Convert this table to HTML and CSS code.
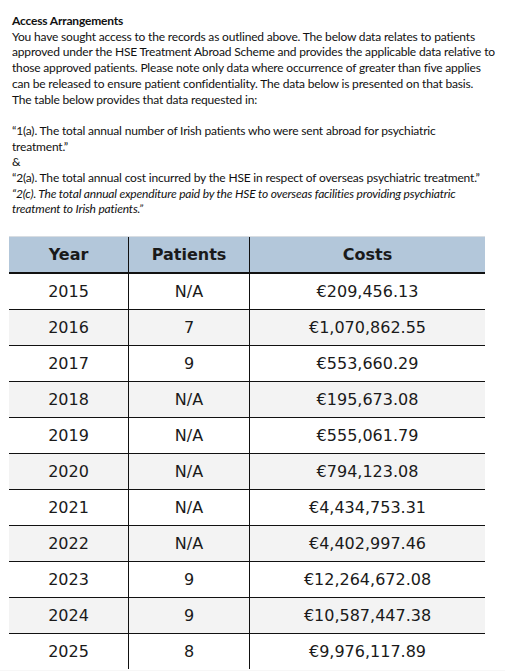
FILE: index.html
```html
<!DOCTYPE html>
<html lang="en">
<head>
    <meta charset="UTF-8">
    <meta name="viewport" content="width=device-width, initial-scale=1.0">
    <title>Access Arrangements</title>
    <link rel="stylesheet" href="styles.css">
</head>
<body>
    <section class="letter">
        <p class="title">Access Arrangements</p>
        <p>You have sought access to the records as outlined above. The below data relates to patients<br>
        approved under the HSE Treatment Abroad Scheme and provides the applicable data relative to<br>
        those approved patients. Please note only data where occurrence of greater than five applies<br>
        can be released to ensure patient confidentiality. The data below is presented on that basis.<br>
        The table below provides that data requested in:</p>

        <p class="gap">“1(a). The total annual number of Irish patients who were sent abroad for psychiatric<br>
        treatment.”<br>
        &amp;<br>
        “2(a). The total annual cost incurred by the HSE in respect of overseas psychiatric treatment.”<br>
        <em>“2(c). The total annual expenditure paid by the HSE to overseas facilities providing psychiatric<br>
        treatment to Irish patients.”</em></p>
    </section>

    <!-- Figures table -->
    <div class="table-wrap">
        <table class="figures">
            <thead>
                <tr><th>Year</th><th>Patients</th><th>Costs</th></tr>
            </thead>
            <tbody>
                <tr><td>2015</td><td>N/A</td><td>€209,456.13</td></tr>
                <tr><td>2016</td><td>7</td><td>€1,070,862.55</td></tr>
                <tr><td>2017</td><td>9</td><td>€553,660.29</td></tr>
                <tr><td>2018</td><td>N/A</td><td>€195,673.08</td></tr>
                <tr><td>2019</td><td>N/A</td><td>€555,061.79</td></tr>
                <tr><td>2020</td><td>N/A</td><td>€794,123.08</td></tr>
                <tr><td>2021</td><td>N/A</td><td>€4,434,753.31</td></tr>
                <tr><td>2022</td><td>N/A</td><td>€4,402,997.46</td></tr>
                <tr><td>2023</td><td>9</td><td>€12,264,672.08</td></tr>
                <tr><td>2024</td><td>9</td><td>€10,587,447.38</td></tr>
                <tr><td>2025</td><td>8</td><td>€9,976,117.89</td></tr>
            </tbody>
        </table>
    </div>
</body>
</html>
```

FILE: styles.css
```css
body {
    margin: 0;
    padding: 0;
    background-color: #ffffff;
}

.letter {
    padding: 13px 0 0 12px;
    font-family: Lato, "Liberation Sans", sans-serif;
    font-size: 12px;
    line-height: 15.7px;
    color: #111;
    letter-spacing: -0.18px;
    white-space: nowrap;
}

.letter p {
    margin: 0;
}

.letter .title {
    font-weight: bold;
}

.letter .gap {
    margin-top: 15.7px;
}

.table-wrap {
    margin-top: 19px;
    padding: 0 20px 4px 9px;
    background: linear-gradient(#f7f7f7, #f7f7f7) bottom / 100% 3px no-repeat;
}

.figures {
    width: 476px;
    border-collapse: collapse;
    color: #1a1a1a;
}

.figures th,
.figures td {
    height: 35px;
    padding: 0;
    text-align: center;
    font-family: "DejaVu Sans", Verdana, sans-serif;
    font-size: 16px;
    border-left: 1px solid #111;
    border-bottom: 1px solid #111;
}

.figures th:first-child,
.figures td:first-child {
    border-left: none;
}

.figures tbody tr:last-child td {
    border-bottom: none;
}

.figures th {
    background-color: #b3c7da;
    font-weight: bold;
    border-top: 1px solid #d8dde2;
    border-bottom: 2px solid #111;
}

.figures th:nth-child(1),
.figures td:nth-child(1) {
    width: 119px;
}

.figures th:nth-child(2),
.figures td:nth-child(2) {
    width: 120px;
}

.figures tbody tr:nth-child(even) td {
    background-color: #f3f3f3;
}
```
